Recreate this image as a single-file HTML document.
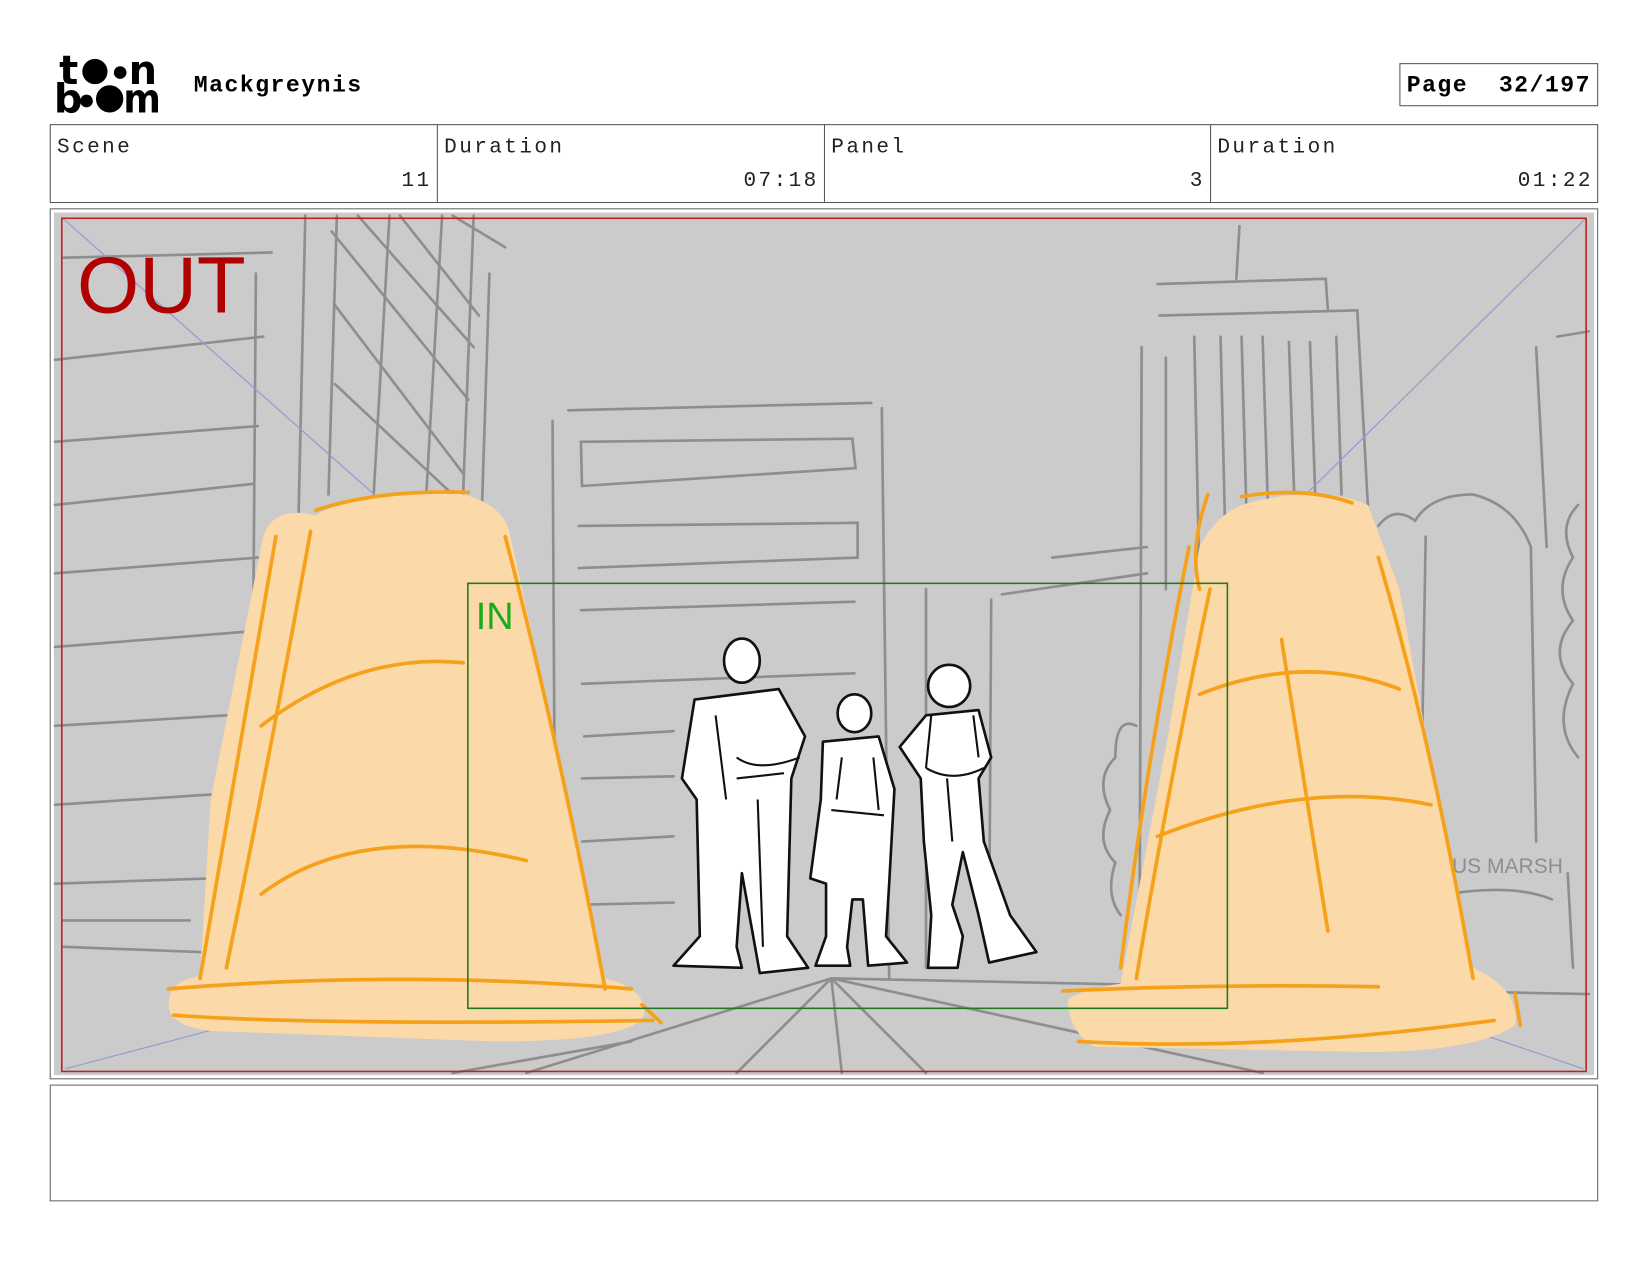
<!DOCTYPE html>
<html><head><meta charset="utf-8"><style>
html,body{margin:0;padding:0;background:#fff;}
svg{display:block;}
</style></head><body>
<svg width="1650" height="1275" viewBox="0 0 1568 1212" xmlns="http://www.w3.org/2000/svg">
<rect width="1568" height="1212" fill="#fff"/>
<!-- logo -->
<g fill="#000" font-family="DejaVu Sans, sans-serif" font-weight="bold">
<text x="56" y="80" font-size="38" letter-spacing="-2">t</text>
<circle cx="90" cy="68" r="12"/><circle cx="114" cy="69" r="6"/>
<text x="122" y="80" font-size="38">n</text>
<text x="51" y="107" font-size="38">b</text>
<circle cx="82" cy="96" r="6"/><circle cx="104" cy="94" r="13"/>
<text x="117" y="107" font-size="38" transform="translate(117 0) scale(0.9 1) translate(-117 0)">m</text>
</g>
<text x="184" y="87" font-family="Liberation Mono, monospace" font-weight="bold" font-size="22" letter-spacing="1.4">Mackgreynis</text>
<rect x="1330.5" y="60.5" width="188" height="40" fill="none" stroke="#555" stroke-width="1"/>
<text x="1337" y="87" font-family="Liberation Mono, monospace" font-weight="bold" font-size="22" letter-spacing="1.4" xml:space="preserve">Page  32/197</text>
<!-- table -->
<rect x="47.5" y="118.5" width="1471" height="74" fill="none" stroke="#555"/>
<line x1="415.5" y1="118" x2="415.5" y2="192" stroke="#555"/>
<line x1="783.5" y1="118" x2="783.5" y2="192" stroke="#555"/>
<line x1="1150.5" y1="118" x2="1150.5" y2="192" stroke="#555"/>
<g font-family="Liberation Mono, monospace" font-size="20" fill="#222" letter-spacing="2.3">
<text x="54" y="145">Scene</text><text x="410" y="177" text-anchor="end">11</text>
<text x="422" y="145">Duration</text><text x="778" y="177" text-anchor="end">07:18</text>
<text x="790" y="145">Panel</text><text x="1145" y="177" text-anchor="end">3</text>
<text x="1157" y="145">Duration</text><text x="1514" y="177" text-anchor="end">01:22</text>
</g>
<!-- panel -->
<rect x="47.5" y="198.5" width="1471" height="827" fill="#fff" stroke="#666"/>
<rect x="51" y="202" width="1464" height="820" fill="#cbcbcb"/>
<g stroke="#8e8e8e" stroke-width="2.5" fill="none" stroke-linecap="round">
<path d="M52 342 L250 320 M52 420 L245 405 M52 480 L240 460 M52 545 L245 530 M52 615 L240 600 M52 690 L215 680 M52 765 L205 755 M52 840 L200 835 M60 245 L258 240"/>
<path d="M243 260 L238 930 M290 205 L282 560 M320 205 L312 470 M370 205 L355 470 M420 205 L405 470 M450 205 L440 470 M465 260 L458 480"/>
<path d="M315 220 L445 380 M318 290 L440 450 M318 365 L430 470 M340 205 L450 330 M380 205 L455 300 M430 205 L480 235"/>
<path d="M540 390 L828 383 M525 400 L528 920 M838 388 L845 930"/>
<path d="M552 420 L810 417 L813 445 L553 462 Z M550 500 L815 497 L815 530 L550 540 M552 580 L812 572 M553 650 L812 640 M555 700 L640 695 M553 740 L640 738 M553 800 L640 795 M553 860 L640 858"/>
<path d="M880 560 L880 920 M942 570 L940 900 M952 565 L1090 545 M1000 530 L1090 520"/>
<path d="M1100 270 L1260 265 L1262 295 M1085 330 L1083 900 M1102 300 L1290 295 M1178 215 L1175 265 M1108 340 L1108 560 M1135 320 L1140 560 M1160 320 L1165 530 M1180 320 L1185 500 M1200 320 L1205 480 M1225 325 L1230 470 M1245 325 L1250 470 M1270 320 L1275 470 M1290 295 L1300 480"/>
<path d="M1460 330 L1470 520 M1480 320 L1510 315"/>
<path d="M1310 500 Q1325 480 1345 495 Q1360 470 1400 470 Q1440 480 1455 520 L1460 800 M1355 510 L1350 800"/>
<path d="M1080 690 Q1060 680 1060 720 Q1040 740 1055 770 Q1040 800 1060 820 Q1050 850 1065 870"/>
<path d="M1500 480 Q1480 500 1495 530 Q1475 560 1495 590 Q1470 620 1495 650 Q1475 690 1500 720"/>
<path d="M1375 850 Q1440 840 1475 855 M1490 830 L1495 920"/>
<path d="M500 1020 L790 930 L700 1020 M790 930 L800 1020 M790 930 L880 1020 M790 930 L1200 1020 M790 930 L1510 945 M60 900 L190 905 M60 875 L180 875 M430 1020 L600 990"/>
</g>
<text x="1380" y="830" font-family="Liberation Sans, sans-serif" font-size="20" fill="#8e8e8e">US MARSH</text>
<g stroke="#9a9ad0" stroke-width="1.2" fill="none">
<path d="M60 208 L440 545 M1507 208 L1170 540 M62 1016 L330 945 M1505 1016 L1340 960"/>
</g>
<!-- left cone -->
<path d="M250 510 Q260 480 300 490 Q340 465 440 470 Q480 480 485 510 L540 760 L575 930 Q615 940 612 965 Q600 990 470 990 L200 980 Q160 975 160 955 Q160 932 190 928 L200 760 Z" fill="#fcd9a8"/>
<g stroke="#f5a11a" stroke-width="3.5" fill="none" stroke-linecap="round">
<path d="M300 485 Q360 465 445 468 M262 510 Q230 700 190 930 M295 505 Q260 700 215 920 M480 510 Q530 700 575 940"/>
<path d="M160 940 Q380 922 600 940 M165 965 Q300 975 620 970 M248 690 Q340 620 440 630 M248 850 Q340 780 500 818 M610 955 L628 972"/>
</g>
<!-- right cone -->
<path d="M1140 520 Q1160 480 1200 475 Q1260 462 1300 480 L1330 560 L1370 780 L1400 920 Q1445 940 1440 975 Q1400 1000 1300 1000 L1040 995 Q1015 980 1015 950 Q1030 940 1065 935 L1110 700 Z" fill="#fcd9a8"/>
<g stroke="#f5a11a" stroke-width="3.5" fill="none" stroke-linecap="round">
<path d="M1148 470 Q1130 520 1140 560 M1180 472 Q1240 462 1285 478 M1130 520 Q1090 720 1065 920 M1150 560 Q1110 750 1080 930 M1310 530 Q1360 700 1400 930"/>
<path d="M1010 942 Q1160 935 1310 938 M1025 990 Q1200 1000 1420 970 M1140 660 Q1240 620 1330 655 M1100 795 Q1240 740 1360 765 M1218 608 Q1240 750 1262 885 M1440 945 L1445 975"/>
</g>
<!-- figures -->
<g stroke="#111" stroke-width="2.5" fill="#fff" stroke-linejoin="round">
<ellipse cx="705" cy="628" rx="17" ry="21"/>
<path d="M660 665 L740 655 L765 700 L752 740 L748 890 L768 920 L722 925 L705 830 L700 900 L705 920 L640 918 L665 890 L662 760 L648 740 Z"/>
<ellipse cx="812" cy="678" rx="16" ry="18"/>
<path d="M782 705 L835 700 L850 750 L845 840 L842 890 L862 915 L825 918 L820 855 L810 855 L805 900 L808 918 L775 918 L785 890 L785 840 L770 835 L780 760 Z"/>
<ellipse cx="902" cy="652" rx="20" ry="20"/>
<path d="M880 680 L930 675 L942 720 L930 740 L935 800 L960 870 L985 905 L940 915 L930 870 L915 810 L905 860 L915 890 L910 920 L882 920 L885 870 L878 800 L875 740 L855 710 Z"/>
</g>
<g stroke="#111" stroke-width="2" fill="none">
<path d="M700 720 Q720 735 760 720 M700 740 L745 735 M790 770 L840 775 M880 730 Q905 745 935 730 M885 680 L880 730 M925 680 L930 720 M680 680 L690 760 M720 760 L725 900 M800 720 L795 760 M830 720 L835 770 M900 740 L905 800"/>
</g>
<!-- frames -->
<rect x="58.5" y="207.5" width="1449" height="811" fill="none" stroke="#c02020" stroke-width="1.5"/>
<rect x="444.5" y="554.5" width="722" height="404" fill="none" stroke="#1f7a1f" stroke-width="1.5"/>
<text x="73" y="297" font-family="Liberation Sans, sans-serif" font-size="76" fill="#b00000">OUT</text>
<text x="452" y="598" font-family="Liberation Sans, sans-serif" font-size="36" fill="#1aaa1a">IN</text>
<rect x="47.5" y="1031.5" width="1471" height="110" fill="none" stroke="#666"/>
</svg>
</body></html>
